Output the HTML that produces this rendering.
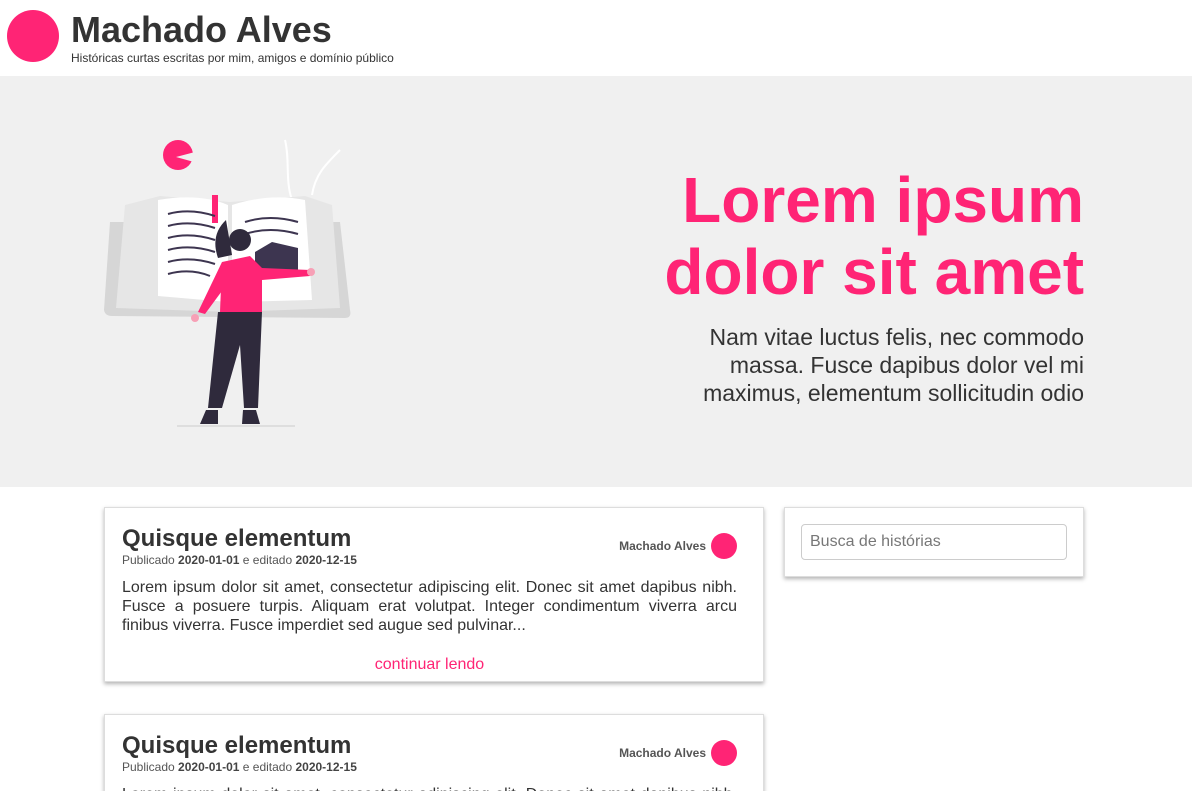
<!DOCTYPE html>
<html><head><meta charset="utf-8"><style>
*{margin:0;padding:0;box-sizing:border-box}
html,body{width:1192px;height:791px;overflow:hidden}
body{background:#fff;font-family:"Liberation Sans",sans-serif;color:#333;position:relative}
.hdr{height:76px;position:relative}
.logo{position:absolute;left:7px;top:10px;width:52px;height:52px;border-radius:50%;background:#ff2475}
.hdr h1{position:absolute;left:71px;top:9px;font-size:36px;font-weight:bold;color:#333}
.hdr p{position:absolute;left:71px;top:51px;font-size:12px;color:#333}
.hero{position:absolute;top:76px;left:0;width:1192px;height:411px;background:#f0f0f0}
.hero h2{position:absolute;right:108px;top:88px;text-align:right;font-size:64px;line-height:72px;color:#ff2475;font-weight:bold}
.hero p{position:absolute;right:108px;top:247px;width:430px;text-align:right;font-size:23px;line-height:28px;color:#333}
.card{position:absolute;left:104px;width:660px;background:#fff;border:1px solid #ddd;box-shadow:0 2px 4px rgba(0,0,0,.3);padding:17px 26px 0 17px}
.card h3{font-size:24px;font-weight:bold;color:#333;line-height:28px}
.meta{font-size:12px;color:#555}
.meta b{color:#444}
.auth{position:absolute;right:26px;top:25px;font-size:12px;font-weight:bold;color:#555;display:flex;align-items:center}
.auth span{display:inline-block;width:26px;height:26px;border-radius:50%;background:#ff2475;margin-left:5px}
.txt{margin-top:11px;font-size:16px;line-height:19px;text-align:justify;color:#333}
.more{text-align:center;color:#ff2475;font-size:16px;margin-top:21px}
.side{position:absolute;left:784px;top:507px;width:300px;height:70px;border:1px solid #ddd;box-shadow:0 2px 4px rgba(0,0,0,.3);background:#fff}
.side div{position:absolute;left:16px;top:16px;width:266px;height:36px;border:1px solid #ccc;border-radius:4px;padding:8px 8px;font-size:16px;color:#777}
</style></head><body>
<div class="hdr"><div class="logo"></div><h1>Machado Alves</h1><p>Históricas curtas escritas por mim, amigos e domínio público</p></div>
<div class="hero">
<svg style="position:absolute;left:100px;top:55px" width="260" height="300" viewBox="100 131 260 300">
<circle cx="178" cy="155" r="15" fill="#ff2475"/><path d="M176 157 L195 152 L194 162 Z" fill="#f0f0f0"/>
<path d="M292 200 C285 180 290 160 285 140 M312 195 C315 175 325 165 340 150" stroke="#fff" stroke-width="2" fill="none"/>
<path d="M110 222 L104 310 Q105 316 112 316 L345 318 Q352 318 350 310 L340 222 Z" fill="#d6d6d6"/>
<path d="M125 205 L116 308 L230 312 L340 308 L332 205 L305 196 L230 202 L160 196 Z" fill="#e6e6e6"/>
<path d="M158 200 Q200 193 228 205 L228 302 L158 296 Z" fill="#fff"/>
<path d="M232 205 Q270 193 305 200 L312 300 L232 302 Z" fill="#fff"/>
<rect x="212" y="195" width="6" height="28" fill="#ff2475"/>
<g stroke="#3d3550" stroke-width="2" fill="none">
<path d="M168 214 Q190 208 215 216 M168 226 Q190 220 215 228 M168 238 Q190 232 215 240 M168 250 Q190 244 215 252 M168 262 Q190 256 215 264 M168 274 Q190 268 210 276"/>
<path d="M245 222 Q270 214 298 222 M245 234 Q270 226 298 234"/></g>
<path d="M255 252 L272 242 L298 248 L298 276 L255 275 Z" fill="#3d3550"/>
<path d="M226 220 Q210 235 218 258 L232 255 Z" fill="#2f2a3c"/>
<circle cx="240" cy="240" r="11" fill="#2f2a3c"/>
<path d="M222 262 L250 256 L262 268 L310 270 L310 276 L262 280 L262 312 L220 312 Z" fill="#ff2475"/>
<path d="M222 262 L198 312 L205 314 L230 280 Z" fill="#ff2475"/>
<circle cx="195" cy="318" r="4" fill="#f7a0b6"/>
<circle cx="311" cy="272" r="4" fill="#f7a0b6"/>
<path d="M218 312 L262 312 L258 408 L244 408 L240 345 L222 408 L208 408 Z" fill="#2f2a3c"/>
<path d="M206 410 L218 410 L218 424 L200 424 Z M243 410 L256 410 L260 424 L242 424 Z" fill="#2f2a3c"/>
<line x1="177" y1="426" x2="295" y2="426" stroke="#ccc"/>
</svg>
<h2>Lorem ipsum<br>dolor sit amet</h2>
<p>Nam vitae luctus felis, nec commodo massa. Fusce dapibus dolor vel mi maximus, elementum sollicitudin odio</p>
</div>
<div class="card" style="top:507px;height:175px"><h3>Quisque elementum</h3><div class="meta">Publicado <b>2020-01-01</b> e editado <b>2020-12-15</b></div><div class="auth">Machado Alves<span></span></div>
<div class="txt">Lorem ipsum dolor sit amet, consectetur adipiscing elit. Donec sit amet dapibus nibh. Fusce a posuere turpis. Aliquam erat volutpat. Integer condimentum viverra arcu finibus viverra. Fusce imperdiet sed augue sed pulvinar...</div>
<div class="more">continuar lendo</div></div>
<div class="card" style="top:714px;height:175px"><h3>Quisque elementum</h3><div class="meta">Publicado <b>2020-01-01</b> e editado <b>2020-12-15</b></div><div class="auth">Machado Alves<span></span></div>
<div class="txt">Lorem ipsum dolor sit amet, consectetur adipiscing elit. Donec sit amet dapibus nibh. Fusce a posuere turpis. Aliquam erat volutpat.</div></div>
<div class="side"><div>Busca de histórias</div></div>
</body></html>
